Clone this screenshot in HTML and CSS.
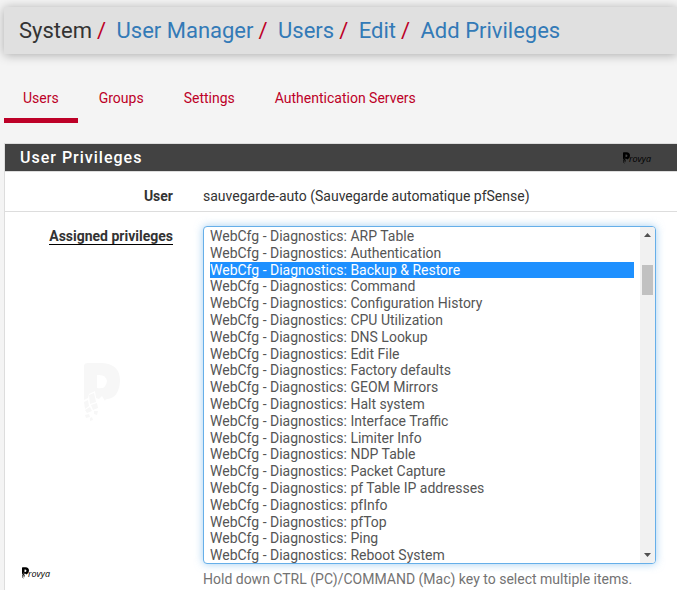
FILE: index.html
```html
<!DOCTYPE html>
<html lang="en">
<head>
<meta charset="utf-8">
<meta name="viewport" content="width=device-width, initial-scale=1">
<title>Add Privileges</title>
<link rel="stylesheet" href="styles.css">
</head>
<body>
<svg class="defs" aria-hidden="true">
  <symbol id="mark" viewBox="0 0 36 60">
    <path fill-rule="evenodd" d="M0 3 Q0 0 4 0 L18 0 Q36 1 36 18 Q35 34 24 36 Q21 36 21 38 L18 33 L15 36 L12 35 L11 28 L5 31 L4 35 L0 37 Z M13 12 L13 25 Q22 27 23 18 Q22 11 13 12 Z"/>
    <path d="M5 32 L10 30 L12 39 L6 41 Z M0 39 L4 37 L5 43 L1 46 Z M7 42 L13 40 L14 45 L9 47 Z M1 47 L6 44 L8 48 L3 50 Z M10 48 L14 48 L13 52 L10 51 Z M1 52 L5 51 L6 54 L2 55 Z M6 55 L8 54 L9 57 L6 58 Z"/>
  </symbol>
</svg>
<header class="header">
  <nav aria-label="Breadcrumb">
    <ol class="breadcrumb">
      <li>System</li>
      <li><a href="#">User Manager</a></li>
      <li><a href="#">Users</a></li>
      <li><a href="#">Edit</a></li>
      <li><a href="#">Add Privileges</a></li>
    </ol>
  </nav>
</header>
<nav class="tabs" aria-label="Sections">
  <a class="tab active" href="#">Users</a>
  <a class="tab" href="#">Groups</a>
  <a class="tab" href="#">Settings</a>
  <a class="tab" href="#">Authentication Servers</a>
</nav>
<main class="panel">
  <div class="panel-heading">
    <h2>User Privileges</h2>
    <span class="brand"><svg class="brand-mark" aria-hidden="true"><use href="#mark"/></svg>rovya</span>
  </div>
  <div class="row">
    <span class="label">User</span>
    <span class="value">sauvegarde-auto (Sauvegarde automatique pfSense)</span>
  </div>
  <form class="row row-privileges">
    <div class="side">
      <label class="label required" for="privileges">Assigned privileges</label>
      <svg class="watermark" aria-hidden="true"><use href="#mark"/></svg>
      <span class="brand"><svg class="brand-mark" aria-hidden="true"><use href="#mark"/></svg>rovya</span>
    </div>
    <div class="field">
      <div class="list">
        <select class="privileges" id="privileges" multiple size="20">
          <option>WebCfg - Diagnostics: ARP Table</option>
          <option>WebCfg - Diagnostics: Authentication</option>
          <option selected>WebCfg - Diagnostics: Backup &amp; Restore</option>
          <option>WebCfg - Diagnostics: Command</option>
          <option>WebCfg - Diagnostics: Configuration History</option>
          <option>WebCfg - Diagnostics: CPU Utilization</option>
          <option>WebCfg - Diagnostics: DNS Lookup</option>
          <option>WebCfg - Diagnostics: Edit File</option>
          <option>WebCfg - Diagnostics: Factory defaults</option>
          <option>WebCfg - Diagnostics: GEOM Mirrors</option>
          <option>WebCfg - Diagnostics: Halt system</option>
          <option>WebCfg - Diagnostics: Interface Traffic</option>
          <option>WebCfg - Diagnostics: Limiter Info</option>
          <option>WebCfg - Diagnostics: NDP Table</option>
          <option>WebCfg - Diagnostics: Packet Capture</option>
          <option>WebCfg - Diagnostics: pf Table IP addresses</option>
          <option>WebCfg - Diagnostics: pfInfo</option>
          <option>WebCfg - Diagnostics: pfTop</option>
          <option>WebCfg - Diagnostics: Ping</option>
          <option>WebCfg - Diagnostics: Reboot System</option>
        </select>
        <div class="scrollbar" aria-hidden="true">
          <svg class="arrow" viewBox="0 0 7 4"><path d="M0 4 L3.5 0 L7 4 Z"/></svg>
          <div class="track"><div class="thumb"></div></div>
          <svg class="arrow" viewBox="0 0 7 4"><path d="M0 0 L3.5 4 L7 0 Z"/></svg>
        </div>
      </div>
      <p class="help">Hold down CTRL (PC)/COMMAND (Mac) key to select multiple items.</p>
    </div>
  </form>
</main>
</body>
</html>
```
FILE: styles.css
```css
* {
  box-sizing: border-box;
}

body {
  margin: 0;
  padding: 7px 0 0 4px;
  overflow: hidden;
  background: #f4f4f4;
  color: #333;
  font: 14px/20px Roboto, sans-serif;
}

a {
  color: #337ab7;
  text-decoration: none;
}

.defs {
  position: absolute;
  width: 0;
  height: 0;
}

.header {
  padding: 8px 15px;
  background: #e0e0e0;
  box-shadow: 0 1px 10px rgba(0, 0, 0, 0.3);
}

.breadcrumb {
  display: flex;
  margin: 0;
  padding: 0;
  list-style: none;
  font-size: 22px;
  line-height: 31px;
}

.breadcrumb li:not(:last-child)::after {
  content: "/\00a0";
  padding: 0 5px;
  color: #bd0027;
}

.tabs {
  display: flex;
  margin: 30px 0 20px;
}

.tab {
  padding: 4px 19px 10px;
  border-bottom: 5px solid transparent;
  color: #bd0027;
  line-height: 20px;
}

.tab + .tab {
  margin-left: 2px;
}

.tab.active {
  border-bottom-color: #bd0027;
}

.panel {
  border: 1px solid #ddd;
  border-right: 0;
  background: #fff;
}

.panel-heading {
  display: flex;
  align-items: center;
  justify-content: space-between;
  padding: 4px 26px 3px 15px;
  background: #424242;
  border-bottom: 1px solid #ddd;
  color: #fff;
}

.panel-heading h2 {
  margin: 0;
  font-size: 16px;
  font-weight: 500;
  line-height: 20px;
  letter-spacing: 1px;
}

.brand {
  display: flex;
  align-items: flex-end;
  color: #000;
  font: italic 9px/10px "Open Sans", sans-serif;
}

.brand-mark {
  width: 7px;
  height: 12px;
  margin-right: -1px;
  fill: #000;
}

.row {
  display: grid;
  grid-template-columns: 168px 1fr;
  column-gap: 30px;
  padding: 14px 21px 5px 0;
  border-bottom: 1px solid #ddd;
}

.label {
  font-weight: 700;
  text-align: right;
}

.required {
  align-self: flex-end;
  border-bottom: 1px solid #000;
  line-height: 16px;
}

.row-privileges {
  border-bottom: 0;
}

.side {
  display: flex;
  flex-direction: column;
  align-items: flex-start;
  padding: 2px 0 10px;
}

.watermark {
  width: 36px;
  height: 60px;
  margin: 118px 0 0 79px;
  fill: #f7f7f7;
}

.side .brand {
  margin: auto 0 0 17px;
}

.list {
  position: relative;
}

.privileges {
  display: block;
  width: 100%;
  height: 338px;
  padding: 1px 21px 0 6px;
  overflow: hidden;
  border: 1px solid #66afe9;
  border-radius: 4px;
  outline: 0;
  background: #fff;
  box-shadow: 0 0 8px rgba(102, 175, 233, 0.6);
  color: #555;
  font: 14px Roboto, sans-serif;
}

.privileges option {
  padding: 0;
}

.privileges option:checked {
  background: #1e90ff linear-gradient(#1e90ff, #1e90ff);
  color: #fff;
}

.scrollbar {
  position: absolute;
  top: 1px;
  right: 1px;
  bottom: 1px;
  display: flex;
  flex-direction: column;
  align-items: center;
  width: 15px;
  padding: 6px 0;
  background: #f1f1f1;
  border-radius: 0 3px 3px 0;
}

.arrow {
  width: 7px;
  height: 4px;
  fill: #505050;
}

.track {
  flex: 1;
  width: 11px;
  padding-top: 28px;
}

.thumb {
  height: 30px;
  background: #c1c1c1;
}

.help {
  margin: 5px 0 0;
  color: #737373;
}
```
